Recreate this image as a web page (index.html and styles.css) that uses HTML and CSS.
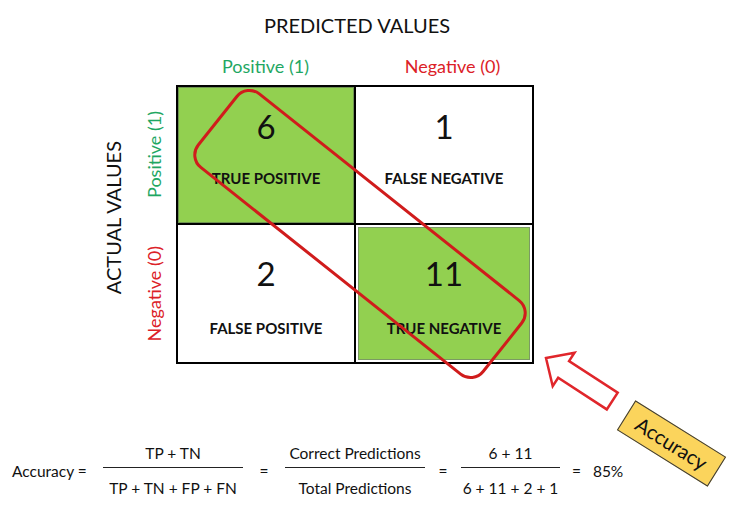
FILE: index.html
```html
<!DOCTYPE html>
<html lang="en">
<head>
<meta charset="utf-8">
<title>Confusion Matrix - Accuracy</title>
<link rel="stylesheet" href="styles.css">
</head>
<body>
<div class="page">
  <h1 class="title">PREDICTED VALUES</h1>
  <div class="matrix">
    <div class="axis-y"><span class="vtext axis-text">ACTUAL VALUES</span></div>
    <div class="row-labels">
      <div class="row-label"><span class="vtext pos">Positive (1)</span></div>
      <div class="row-label"><span class="vtext neg">Negative (0)</span></div>
    </div>
    <div class="table-wrap">
      <div class="col-labels">
        <span class="col-label pos">Positive (1)</span>
        <span class="col-label neg">Negative (0)</span>
      </div>
      <div class="table">
        <div class="cell green top"><span class="num">6</span><span class="lbl">TRUE POSITIVE</span></div>
        <div class="cell top"><span class="num">1</span><span class="lbl">FALSE NEGATIVE</span></div>
        <div class="cell bottom"><span class="num">2</span><span class="lbl">FALSE POSITIVE</span></div>
        <div class="cell green inset bottom"><span class="num">11</span><span class="lbl">TRUE NEGATIVE</span></div>
      </div>
    </div>
  </div>
  <div class="formula">
    <span class="lhs">Accuracy =</span>
    <div class="frac f1"><span class="n">TP + TN</span><span class="d">TP + TN + FP + FN</span></div>
    <span class="eq e1">=</span>
    <div class="frac f2"><span class="n">Correct Predictions</span><span class="d">Total Predictions</span></div>
    <span class="eq e2">=</span>
    <div class="frac f3"><span class="n">6 + 11</span><span class="d">6 + 11 + 2 + 1</span></div>
    <span class="result">=&nbsp;&nbsp;&nbsp;85%</span>
  </div>
</div>
<svg class="overlay" width="744" height="521" viewBox="0 0 744 521" aria-hidden="true">
  <rect x="-182" y="-47" width="364" height="94" rx="16" ry="16" transform="translate(360 234) rotate(38.5)" fill="none" stroke="#d01c1c" stroke-width="3"/>
  <polygon points="0,0 21,-20 21,-10 79,-10 79,10 21,10 21,20" transform="translate(546 358) rotate(33)" fill="#fff" stroke="#e0262b" stroke-width="2.5" stroke-linejoin="miter"/>
</svg>
<div class="tag">Accuracy</div>
</body>
</html>
```
FILE: styles.css
```css
html, body {
  margin: 0;
  padding: 0;
  background: #fff;
}
body {
  width: 744px;
  height: 521px;
  position: relative;
  overflow: hidden;
  font-family: "Lato", "Open Sans", sans-serif;
  color: #111;
}
.page {
  display: flex;
  flex-direction: column;
}
.title {
  margin: 0 0 0 176px;
  width: 362px;
  padding-top: 13px;
  font-size: 20px;
  line-height: 24px;
  font-weight: 400;
  text-align: center;
}
.matrix {
  display: flex;
  flex-direction: row;
}
.axis-y {
  margin-left: 98px;
  width: 30px;
  padding-top: 48px;
  padding-bottom: 14px;
  box-sizing: content-box;
  height: 265px;
  display: flex;
  align-items: center;
  justify-content: center;
}
.vtext {
  writing-mode: vertical-rl;
  transform: rotate(180deg);
  white-space: nowrap;
}
.axis-text {
  font-size: 20px;
  line-height: 24px;
}
.row-labels {
  width: 48px;
  padding-top: 48px;
  display: flex;
  flex-direction: column;
}
.row-label {
  height: 139px;
  display: flex;
  align-items: center;
  justify-content: center;
  padding-left: 4px;
  font-size: 18px;
  line-height: 21px;
}
.pos { color: #1fa763; }
.neg { color: #dc2127; }
.table-wrap {
  display: flex;
  flex-direction: column;
}
.col-labels {
  height: 48px;
  display: flex;
  box-sizing: border-box;
  padding-top: 19px;
}
.col-label {
  width: 179px;
  text-align: center;
  font-size: 18px;
  line-height: 21px;
}
.col-label.neg { padding-left: 8px; }
.table {
  width: 358px;
  box-sizing: border-box;
  display: grid;
  grid-template-columns: 176px 176px;
  grid-template-rows: 136px 137px;
  gap: 2px;
  border: 2px solid #000;
  background: #000;
}
.cell {
  background: #fff;
  display: flex;
  flex-direction: column;
  align-items: center;
}
.cell.green {
  background: #92d050;
  box-shadow: inset 0 0 0 1px #6e9350;
}
.cell.green.inset {
  box-shadow: inset 0 0 0 2px #fff, inset 0 0 0 3px #7b9a63;
}
.num {
  font-size: 33px;
  line-height: 36px;
}
.lbl {
  font-size: 15px;
  line-height: 18px;
  font-weight: 700;
}
.cell.top .num { margin-top: 21px; }
.cell.top .lbl { margin-top: 25px; }
.cell.bottom .num { margin-top: 30px; }
.cell.bottom .lbl { margin-top: 28px; }
.formula {
  margin-top: 80px;
  padding-left: 12px;
  display: flex;
  flex-direction: row;
  align-items: center;
  font-size: 15.5px;
  line-height: 18px;
  white-space: nowrap;
}
.lhs { width: 91px; }
.frac {
  display: flex;
  flex-direction: column;
  align-items: center;
}
.frac .n {
  padding-bottom: 5px;
  border-bottom: 1px solid #222;
  width: 100%;
  text-align: center;
}
.frac .d {
  margin-top: 11px;
}
.f1 { width: 140px; }
.f2 { width: 140px; }
.f3 { width: 99px; }
.eq { text-align: center; }
.e1 { width: 42px; }
.e2 { width: 36px; }
.result { margin-left: 12px; }
.overlay {
  position: absolute;
  left: 0;
  top: 0;
  pointer-events: none;
}
.tag {
  position: absolute;
  left: 618px;
  top: 426px;
  width: 107px;
  height: 35px;
  box-sizing: border-box;
  border: 1px solid #3a3a3a;
  background: #fbd45c;
  transform: rotate(32deg);
  font-size: 20px;
  line-height: 33px;
  text-align: center;
  color: #111;
}
```
